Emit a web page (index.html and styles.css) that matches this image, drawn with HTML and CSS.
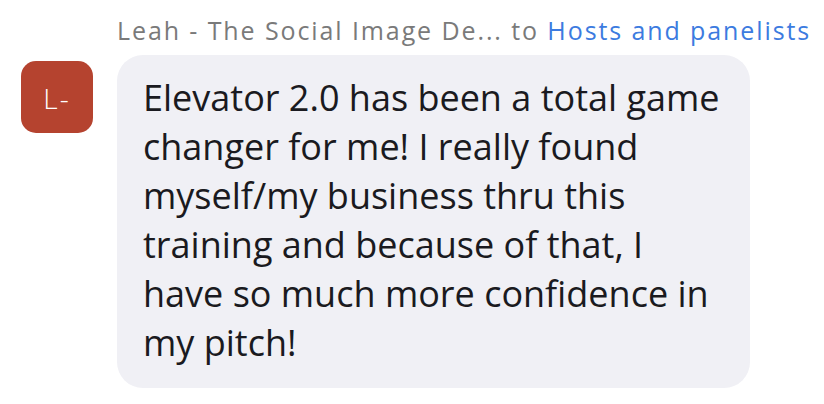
FILE: index.html
```html
<!DOCTYPE html>
<html>
<head>
<meta charset="utf-8">
<link rel="stylesheet" href="styles.css">
</head>
<body>
<div class="chat">
  <div class="header">Leah - The Social Image De... to <span class="to">Hosts and panelists</span></div>
  <div class="row">
    <div class="avatar">L-</div>
    <div class="bubble">Elevator 2.0 has been a total game changer for me! I really found myself/my business thru this training and because of that, I have so much more confidence in my pitch!</div>
  </div>
</div>
</body>
</html>
```

FILE: styles.css
```css
html, body {
  margin: 0;
  padding: 0;
  background: #ffffff;
}
.chat {
  width: 824px;
  height: 404px;
  font-family: "Open Sans", "Noto Sans", sans-serif;
  padding: 13px 0 0 21px;
  box-sizing: border-box;
}
.header {
  margin-left: 96px;
  font-size: 25px;
  letter-spacing: 1.9px;
  line-height: 34px;
  color: #7a7a7a;
  white-space: nowrap;
}
.to {
  color: #3c7be0;
}
.row {
  display: flex;
  gap: 24px;
  margin-top: 8px;
}
.avatar {
  width: 72px;
  height: 72px;
  flex: none;
  margin-top: 6px;
  border-radius: 15px;
  background: #b5432f;
  color: #ffffff;
  font-size: 28px;
  font-weight: 300;
  letter-spacing: 2px;
  display: flex;
  align-items: center;
  justify-content: center;
  padding-top: 2px;
  box-sizing: border-box;
}
.bubble {
  width: 633px;
  box-sizing: border-box;
  padding: 18px 18px 21px 26px;
  background: #f0f0f5;
  border-radius: 26px;
  color: #1a1a20;
  font-size: 36px;
  line-height: 49px;
}
```
